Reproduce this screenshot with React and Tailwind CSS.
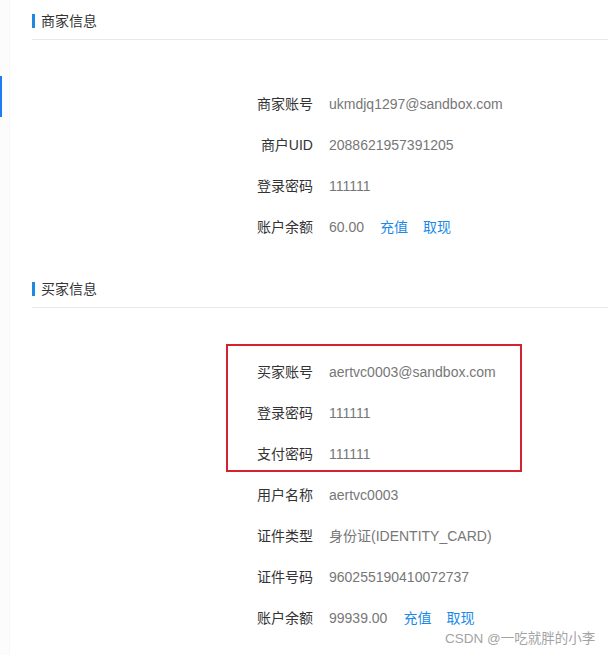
const sellerRows = [
  { label: '商家账号', value: 'ukmdjq1297@sandbox.com' },
  { label: '商户UID', value: '2088621957391205' },
  { label: '登录密码', value: '111111' },
  { label: '账户余额', value: '60.00', actions: true },
];

const buyerRows = [
  { label: '买家账号', value: 'aertvc0003@sandbox.com' },
  { label: '登录密码', value: '111111' },
  { label: '支付密码', value: '111111' },
  { label: '用户名称', value: 'aertvc0003' },
  { label: '证件类型', value: '身份证(IDENTITY_CARD)' },
  { label: '证件号码', value: '960255190410072737' },
  { label: '账户余额', value: '99939.00', actions: true },
];

function SectionTitle({ title }) {
  return (
    <div className="h-[40px] border-b border-[#e8e8e8] flex items-center pt-[3px]">
      <span className="w-[3px] h-[14px] bg-[#1e88e5]"></span>
      <span className="ml-[6px] text-[14px] text-[#333]">{title}</span>
    </div>
  );
}

function InfoRow({ label, value, actions }) {
  return (
    <div className="h-[41px] flex items-center text-[14px]">
      <div className="w-[281px] text-right text-[#333]">{label}</div>
      <div className="ml-4 text-[#777]">{value}</div>
      {actions && (
        <>
          <a className="ml-4 text-[#1a8ae6] cursor-pointer">充值</a>
          <a className="ml-[15px] text-[#1a8ae6] cursor-pointer">取现</a>
        </>
      )}
    </div>
  );
}

function App() {
  return (
    <div
      className="relative flex min-h-[655px] bg-white overflow-hidden"
      style={{ fontFamily: '"Liberation Sans", "Noto Sans CJK SC", sans-serif' }}
    >
      {/* side menu edge */}
      <div className="w-[10px] shrink-0 bg-[#fcfcfc] border-r border-[#f7f7f7]">
        <div className="mt-[76px] h-[41px] w-[2px] bg-[#1e7cf2]"></div>
      </div>

      <div className="flex-1 pl-[22px]">
        <SectionTitle title="商家信息" />
        <div className="pt-[44px]">
          {sellerRows.map((row) => (
            <InfoRow key={row.label} {...row} />
          ))}
        </div>

        <div className="mt-5">
          <SectionTitle title="买家信息" />
        </div>
        <div className="pt-[44px]">
          {buyerRows.map((row, i) => (
            <InfoRow key={i} {...row} />
          ))}
        </div>
      </div>

      {/* red annotation box */}
      <div className="absolute left-[226px] top-[344px] w-[296px] h-[128px] border-2 border-[#d6222e] pointer-events-none"></div>

      {/* watermark */}
      <div className="absolute left-[445px] top-[629px] text-[13.5px] text-[#a3a3a3] [text-shadow:0_0_2px_#fff]">
        CSDN @一吃就胖的小李
      </div>
    </div>
  );
}

export default App;
